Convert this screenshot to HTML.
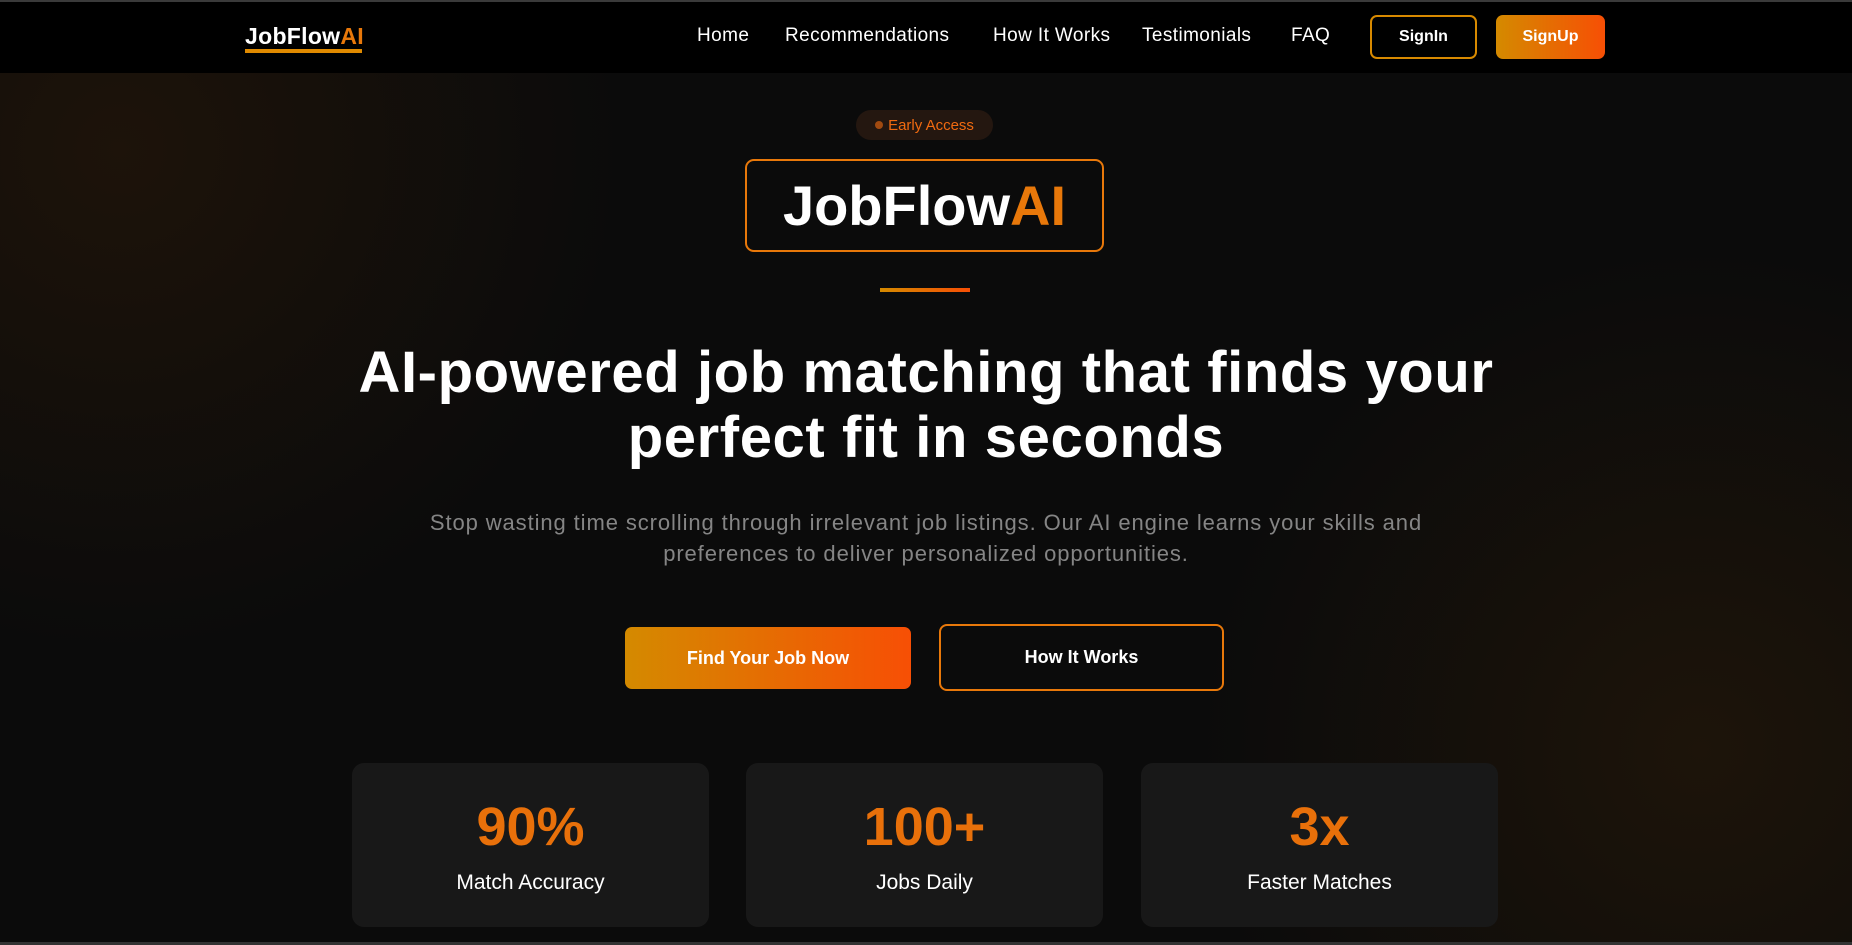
<!DOCTYPE html>
<html><head><meta charset="utf-8"><style>
*{margin:0;padding:0;box-sizing:border-box}
html,body{width:1852px;height:945px;overflow:hidden}
body{background:#0b0b0b;font-family:"Liberation Sans",sans-serif;color:#fff;position:relative;
background:radial-gradient(ellipse 500px 500px at 120px 150px,#1d130a 0%,rgba(11,11,11,0) 100%),radial-gradient(ellipse 500px 500px at 1700px 750px,#1d140a 0%,rgba(11,11,11,0) 100%),#0b0b0b}
.top{position:absolute;left:0;top:0;width:1852px;height:2px;background:#3a3a3a}
nav{position:absolute;left:0;top:2px;width:1852px;height:71px;background:#000}
.abs{position:absolute}
.logo{left:245px;top:23px;font-weight:bold;font-size:23px;letter-spacing:0.3px}
.or{color:#e8780a}
.ul{left:245px;top:49px;width:117px;height:4px;background:#e08a00}
.nl{top:25px;font-size:19px;color:#fff;letter-spacing:0.4px}
.btn{display:flex;align-items:center;justify-content:center;font-weight:bold;font-size:16px;border-radius:7px}
.grad{background:linear-gradient(90deg,#d48a00,#f74f05)}
.pill{left:856px;top:110px;width:137px;height:30px;border-radius:15px;background:#241710;color:#f06a10;font-size:15px;display:flex;align-items:center;justify-content:center}
.pill i{display:inline-block;width:8px;height:8px;border-radius:50%;background:#a14a10;margin-right:5px}
.h1{left:0;width:1852px;text-align:center;font-weight:bold;font-size:58px;letter-spacing:0.6px;line-height:65px}
.p{left:0;width:1852px;text-align:center;color:#858585;font-size:22px;letter-spacing:0.9px;line-height:31px}
.card{top:763px;width:357px;height:164px;background:#181818;border-radius:12px;text-align:center}
.card b{display:block;margin-top:34px;font-size:54px;color:#e8700a;line-height:60px}
.card span{display:block;margin-top:14px;font-size:21px}
</style></head><body>
<div class="top"></div>
<nav></nav>
<div class="abs logo">JobFlow<span class="or">AI</span></div>
<div class="abs ul"></div>
<div class="abs nl" style="left:697px">Home</div>
<div class="abs nl" style="left:785px">Recommendations</div>
<div class="abs nl" style="left:993px">How It Works</div>
<div class="abs nl" style="left:1142px">Testimonials</div>
<div class="abs nl" style="left:1291px">FAQ</div>
<div class="abs btn" style="left:1370px;top:15px;width:107px;height:44px;border:2px solid #d88a00;font-size:16px">SignIn</div>
<div class="abs btn grad" style="left:1496px;top:15px;width:109px;height:44px">SignUp</div>
<div class="abs pill"><i></i>Early Access</div>
<div class="abs" style="left:745px;top:159px;width:359px;height:93px;border:2px solid #e8780a;border-radius:9px;display:flex;align-items:center;justify-content:center;font-weight:bold;font-size:56px;letter-spacing:0px">JobFlow<span class="or">AI</span></div>
<div class="abs grad" style="left:880px;top:288px;width:90px;height:4px"></div>
<div class="abs h1" style="top:340px">AI-powered job matching that finds your<br>perfect fit in seconds</div>
<div class="abs p" style="top:507px">Stop wasting time scrolling through irrelevant job listings. Our AI engine learns your skills and<br>preferences to deliver personalized opportunities.</div>
<div class="abs btn grad" style="left:625px;top:627px;width:286px;height:62px;font-size:18px">Find Your Job Now</div>
<div class="abs btn" style="left:939px;top:624px;width:285px;height:67px;border:2px solid #e8780a;border-radius:8px;font-size:18px">How It Works</div>
<div class="abs card" style="left:352px"><b>90%</b><span>Match Accuracy</span></div>
<div class="abs card" style="left:746px"><b>100+</b><span>Jobs Daily</span></div>
<div class="abs card" style="left:1141px"><b>3x</b><span>Faster Matches</span></div>
<div class="abs" style="left:0;top:942px;width:1852px;height:3px;background:#333"></div>
</body></html>
